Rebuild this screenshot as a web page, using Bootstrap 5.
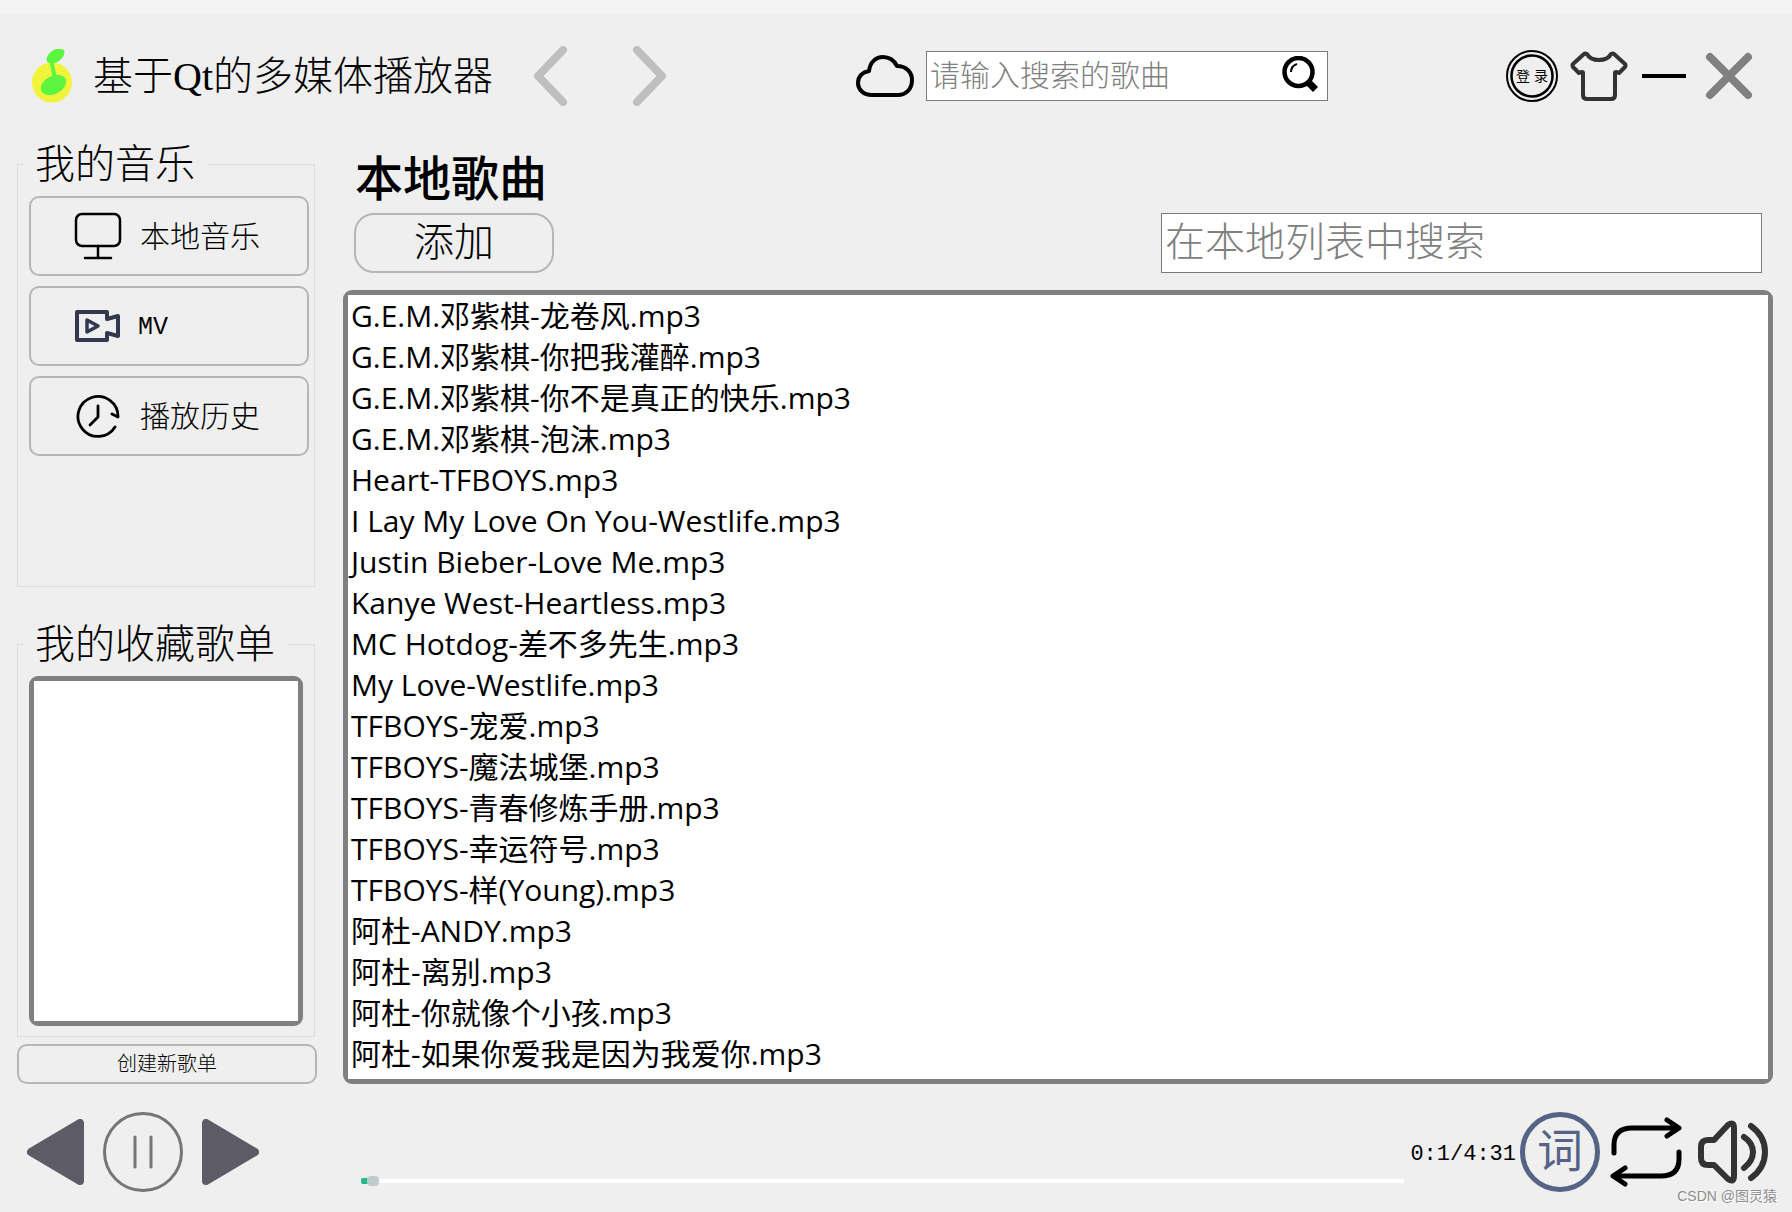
<!DOCTYPE html>
<html lang="zh-CN">
<head>
<meta charset="utf-8">
<meta name="viewport" content="width=device-width, initial-scale=1">
<title>基于Qt的多媒体播放器</title>
<link href="https://cdn.jsdelivr.net/npm/bootstrap@5.3.0/dist/css/bootstrap.min.css" rel="stylesheet">
<style>
  body { background: #efefef; color: #000; font-family: "Liberation Serif", "Noto Sans CJK SC", sans-serif; font-weight: 300; }
  button { background: none; border: 0; padding: 0; color: inherit; font-weight: inherit; }
  svg { display: block; }
  .strip { height: 14px; background: #f3f3f3; }
  .topbar { height: 124px; padding: 0 38px 0 32px; }
  .app-name { font-size: 40px; line-height: 50px; padding-top: 2px; margin: 0 40px 0 21px; font-weight: 300; }
  .forward { margin-left: 64px; }
  .cloud { margin: 0 12px 0 11px; }
  .box-input { background: #fff; border: 1px solid #7a7a7a; border-radius: 0; padding: 0 3px; color: #000; min-width: 0; font-weight: 300; }
  .box-input::placeholder { color: #808080; opacity: 1; }
  .web-search { width: 402px; }
  .web-search input { height: 50px; font-size: 30px; padding-right: 54px; }
  .web-search button { right: 10px; top: 5px; }
  .side { width: 300px; margin-left: 17px; flex: none; }
  .group { border: 1px solid #dcdcdc; padding: 6px 5px 10px 11px; margin-right: 2px; min-width: 0; }
  .group legend { font-size: 40px; line-height: 50px; padding: 2px 12px 0 10px; margin: 0 0 0 -4px; }
  .group-music { flex: 450 1 0; }
  .group-fav { flex: 418 1 0; margin-top: 31px; }
  .nav-lines { gap: 10px; }
  .line-btn { border: 2px solid #b6b6b6; border-radius: 10px; }
  .nav-line { height: 80px; padding-left: 43px; font-size: 30px; }
  .nav-line svg { margin-right: 18px; }
  .mono { font-family: "Liberation Mono", monospace; font-weight: 400; }
  .nav-line .mono { font-size: 25px; padding-top: 4px; }
  .fav-list { border: 5px solid #808080; border-radius: 9px; background: #808080; margin-right: 6px; min-height: 60px; }
  .fav-list div, .songs ul { background: #fff; }
  .create { height: 40px; font-size: 20px; margin-top: 7px; }
  .content { margin: 0 19px 0 26px; min-width: 0; }
  .page-title { font-size: 48px; line-height: 67px; padding: 8px 0 0 12px; margin: 0; font-weight: 500; }
  .tools { padding: 0 11px; margin-bottom: 17px; }
  .add { width: 200px; height: 60px; border-radius: 20px; font-size: 40px; line-height: 52px; }
  .local-search { width: 601px; height: 60px; font-size: 40px; }
  .songs { border: 5px solid #808080; border-radius: 9px; background: #808080; }
  .songs ul { font-family: "Open Sans", "Noto Sans CJK SC", sans-serif; font-kerning: none; font-size: 30px; font-weight: 400; padding: 0 3px; }
  .songs li { height: 41px; line-height: 41px; white-space: nowrap; }
  .player { padding: 28px 24px 20px 27px; }
  .pause { margin: 0 19px; }
  .seek { -webkit-appearance: none; appearance: none; height: 22px; background: none; margin: 0 6px 0 102px; min-width: 0; }
  .seek::-webkit-slider-runnable-track { height: 6px; border-radius: 2px; background: linear-gradient(#26b88f, #26b88f) 0 0 / 12px 6px no-repeat, linear-gradient(#fff, #fff) 0 50% / 100% 4px no-repeat; }
  .seek::-webkit-slider-thumb { -webkit-appearance: none; width: 12px; height: 10px; margin-top: -2px; border-radius: 4px; background: #c0cbce; }
  .time { font-size: 22px; margin-right: 4px; padding-top: 4px; }
  .lyric { width: 80px; height: 80px; border: 5px solid #556384; border-radius: 50%; color: #556384; font-size: 46px; line-height: 66px; font-weight: 400; }
  .mark-text { right: 15px; bottom: 6px; font: 400 14px/20px "Liberation Sans", "Noto Sans CJK SC", sans-serif; color: #8c8c8c; text-shadow: 1px 1px 0 #fff; }
</style>
</head>
<body>
<div class="d-flex flex-column min-vh-100 position-relative">
  <div class="strip"></div>
  <header class="topbar d-flex align-items-center">
    <svg width="40" height="54" viewBox="0 0 40 54"><ellipse cx="20" cy="33.500" rx="20" ry="20" fill="#f2f43c"/><g fill="#5cf53f"><ellipse cx="23.500" cy="7" rx="10" ry="6" transform="rotate(-35 23.500 7)"/><ellipse cx="21.500" cy="36" rx="13.500" ry="9" transform="rotate(-28 21.500 36)"/></g><path d="M19 10l4 20" stroke="#5cf53f" stroke-width="4"/></svg>
    <h1 class="app-name text-nowrap">基于Qt的多媒体播放器</h1>
    <button aria-label="后退"><svg width="35" height="60" viewBox="0 0 35 60" fill="none" stroke="#bfbfbf" stroke-width="8" stroke-linecap="round" stroke-linejoin="round"><path d="M30 4L5 30l25 26"/></svg></button>
    <button class="forward me-auto" aria-label="前进"><svg width="35" height="60" viewBox="0 0 35 60" fill="none" stroke="#bfbfbf" stroke-width="8" stroke-linecap="round" stroke-linejoin="round"><path d="M5 4l25 26L5 56"/></svg></button>
    <svg class="cloud" width="58" height="42" viewBox="0 0 58 42" fill="none" stroke="#000" stroke-width="4"><path d="M16 40C7 40 2 34 2 28c0-7 5-11 11-12C14 7 20 2 27 2c6 0 11 3 14 9 9 0 15 6 15 14 0 9-6 15-14 15z" stroke-linejoin="round"/></svg>
    <form class="web-search position-relative" role="search">
      <input type="text" class="box-input w-100" placeholder="请输入搜索的歌曲" aria-label="请输入搜索的歌曲">
      <button type="button" class="position-absolute" aria-label="搜索"><svg width="36" height="36" viewBox="0 0 36 36" fill="none" stroke="#000"><circle cx="16.500" cy="16" r="14" stroke-width="4.500"/><path d="M9 16q0-6 6-8" stroke-width="2"/><path d="M25 25l8.500 8.500" stroke-width="7"/></svg></button>
    </form>
    <div class="d-flex align-items-center ms-auto">
      <button aria-label="登录"><svg width="52" height="52" viewBox="0 0 52 52"><g fill="none" stroke="#000"><circle cx="26" cy="26" r="25" stroke-width="2"/><circle cx="26" cy="26" r="20.500" stroke-width="2.500"/></g><text x="10" y="31" font-size="14" font-weight="400">登</text><text x="28" y="31" font-size="14" font-weight="400">录</text></svg></button>
      <button class="mx-2 px-1" aria-label="换肤"><svg width="58" height="50" viewBox="0 0 58 50" fill="none" stroke="#333" stroke-width="4" stroke-linejoin="round" stroke-linecap="round"><path d="M14 3q1-1 3 0 3 6 12 6t12-6q2-1 3 0l11 10q1 1 0 3l-6 6q-4-2-4 0v22q0 4-4 4H17q-4 0-4-4V22q0-2-4 0l-6-6q-1-2 0-3z"/></svg></button>
      <button aria-label="最小化"><svg width="48" height="46" viewBox="0 0 48 46"><path d="M2 23h44" stroke="#000" stroke-width="4"/></svg></button>
      <button class="ms-3" aria-label="关闭"><svg width="50" height="50" viewBox="0 0 50 50"><path d="M6 6l38 38M44 6L6 44" stroke="#808080" stroke-width="8" stroke-linecap="round"/></svg></button>
    </div>
  </header>

  <div class="d-flex flex-grow-1">
    <aside class="side d-flex flex-column">
      <fieldset class="group group-music">
        <legend class="float-none w-auto">我的音乐</legend>
        <div class="nav-lines d-grid">
          <button class="line-btn nav-line d-flex align-items-center"><svg width="48" height="48" viewBox="0 0 48 48" fill="none" stroke="#000" stroke-width="2.500" stroke-linecap="round"><rect x="2" y="2" width="44" height="32" rx="6"/><path d="M24 34v12M11 46h26"/></svg>本地音乐</button>
          <button class="line-btn nav-line d-flex align-items-center"><svg width="46" height="34" viewBox="0 0 46 34" fill="none" stroke="#33384f" stroke-width="4" stroke-linejoin="round"><path d="M3 3h30v7l11-3v20l-11-3v7H3z"/><path d="M13 11v12l11-6z" stroke-width="3.500"/></svg><span class="mono">MV</span></button>
          <button class="line-btn nav-line d-flex align-items-center"><svg width="48" height="44" viewBox="0 0 48 44" fill="none" stroke="#000" stroke-width="2.800" stroke-linecap="round" stroke-linejoin="round"><path d="M41 33A20 20 0 1 1 44 23l-6-3"/><path d="M24 12v11l-8 8"/></svg>播放历史</button>
        </div>
      </fieldset>
      <fieldset class="group group-fav d-flex flex-column">
        <legend class="float-none w-auto">我的收藏歌单</legend>
        <div class="fav-list flex-grow-1 d-flex"><div class="flex-grow-1"></div></div>
      </fieldset>
      <button class="line-btn create">创建新歌单</button>
    </aside>

    <main class="content flex-grow-1 d-flex flex-column">
      <h2 class="page-title">本地歌曲</h2>
      <div class="tools d-flex justify-content-between">
        <button class="line-btn add">添加</button>
        <input type="text" class="box-input local-search" placeholder="在本地列表中搜索" aria-label="在本地列表中搜索">
      </div>
      <div class="songs flex-grow-1 d-flex">
        <ul class="list-unstyled m-0 flex-grow-1">
          <li>G.E.M.邓紫棋-龙卷风.mp3</li>
          <li>G.E.M.邓紫棋-你把我灌醉.mp3</li>
          <li>G.E.M.邓紫棋-你不是真正的快乐.mp3</li>
          <li>G.E.M.邓紫棋-泡沫.mp3</li>
          <li>Heart-TFBOYS.mp3</li>
          <li>I Lay My Love On You-Westlife.mp3</li>
          <li>Justin Bieber-Love Me.mp3</li>
          <li>Kanye West-Heartless.mp3</li>
          <li>MC Hotdog-差不多先生.mp3</li>
          <li>My Love-Westlife.mp3</li>
          <li>TFBOYS-宠爱.mp3</li>
          <li>TFBOYS-魔法城堡.mp3</li>
          <li>TFBOYS-青春修炼手册.mp3</li>
          <li>TFBOYS-幸运符号.mp3</li>
          <li>TFBOYS-样(Young).mp3</li>
          <li>阿杜-ANDY.mp3</li>
          <li>阿杜-离别.mp3</li>
          <li>阿杜-你就像个小孩.mp3</li>
          <li>阿杜-如果你爱我是因为我爱你.mp3</li>
        </ul>
      </div>
    </main>
  </div>

  <footer class="player d-flex align-items-center">
    <button aria-label="上一首"><svg width="57" height="66" viewBox="0 0 57 66"><path d="M4 33L53 4v58z" fill="#5c5b66" stroke="#5c5b66" stroke-width="8" stroke-linejoin="round"/></svg></button>
    <button class="pause" aria-label="暂停"><svg width="80" height="80" viewBox="0 0 80 80" fill="none" stroke="#757575" stroke-width="3" stroke-linecap="round"><circle cx="40" cy="40" r="38.500"/><path d="M32 25v30M48 25v30"/></svg></button>
    <button aria-label="下一首"><svg width="57" height="66" viewBox="0 0 57 66"><path d="M53 33L4 4v58z" fill="#5c5b66" stroke="#5c5b66" stroke-width="8" stroke-linejoin="round"/></svg></button>
    <input type="range" class="seek flex-grow-1 align-self-end" min="0" max="271" step="0.5" value="1.5" aria-label="播放进度">
    <span class="time mono">0:1/4:31</span>
    <button class="lyric">词</button>
    <button class="ms-2 me-3" aria-label="循环播放"><svg width="74" height="70" viewBox="0 0 74 70" fill="none" stroke="#000" stroke-width="5" stroke-linecap="round" stroke-linejoin="round"><path d="M6 36V28Q6 11 24 11H70M59 3l12 8-12 8M71 35v7Q71 59 53 59H6M17 51L5 59l12 8"/></svg></button>
    <button aria-label="音量"><svg width="70" height="64" viewBox="0 0 70 64" fill="none" stroke="#333" stroke-width="6" stroke-linecap="round" stroke-linejoin="round"><path d="M16 20H10q-7 0-7 7v11q0 7 7 7h6l14 14q6 4 6-3V8q0-7-6-3z"/><path d="M46 17q9 6 9 15t-9 16M53 6q14 10 14 26T53 58"/></svg></button>
  </footer>
  <span class="mark-text position-absolute">CSDN @图灵猿</span>
</div>
<script src="https://cdn.jsdelivr.net/npm/bootstrap@5.3.0/dist/js/bootstrap.bundle.min.js"></script>
</body>
</html>
